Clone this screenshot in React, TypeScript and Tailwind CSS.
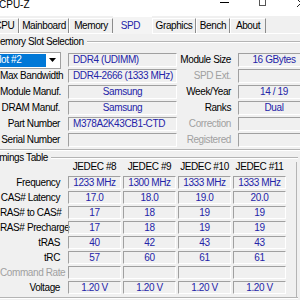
import React from "react";

const font = "font-['Liberation_Sans',Arial,sans-serif]";

interface TabItem {
  label: string;
  w: string;
  active?: boolean;
}

const tabs: TabItem[] = [
  { label: "CPU", w: "w-[29px]" },
  { label: "Mainboard", w: "w-[50px]" },
  { label: "Memory", w: "w-[44px]" },
  { label: "SPD", w: "w-[39px]", active: true },
  { label: "Graphics", w: "w-[44px]" },
  { label: "Bench", w: "w-[34px]" },
  { label: "About", w: "w-[36px]" },
];

const slotRows = [
  { l: "Max Bandwidth", v: "DDR4-2666 (1333 MHz)", left: true, r: "SPD Ext.", rv: "", dim: true },
  { l: "Module Manuf.", v: "Samsung", r: "Week/Year", rv: "14 / 19" },
  { l: "DRAM Manuf.", v: "Samsung", r: "Ranks", rv: "Dual" },
  { l: "Part Number", v: "M378A2K43CB1-CTD", left: true, r: "Correction", rv: "", dim: true },
  { l: "Serial Number", v: "", r: "Registered", rv: "", dim: true },
];

const timings = [
  { l: "Frequency", v: ["1233 MHz", "1300 MHz", "1333 MHz", "1333 MHz"] },
  { l: "CAS# Latency", v: ["17.0", "18.0", "19.0", "20.0"] },
  { l: "RAS# to CAS#", v: ["17", "18", "19", "19"] },
  { l: "RAS# Precharge", v: ["17", "18", "19", "19"] },
  { l: "tRAS", v: ["40", "42", "43", "43"] },
  { l: "tRC", v: ["57", "60", "61", "61"] },
  { l: "Command Rate", v: ["", "", "", ""], dim: true },
  { l: "Voltage", v: ["1.20 V", "1.20 V", "1.20 V", "1.20 V"] },
];

function Field({ children, className = "", left = false }: { children?: React.ReactNode; className?: string; left?: boolean }) {
  return (
    <div
      className={`shrink-0 flex items-center border border-t-[#a0a0a0] border-l-[#a0a0a0] border-b-white border-r-white text-[#2424a8] leading-none whitespace-nowrap overflow-hidden ${
        left ? "justify-start pl-[4px]" : "justify-center"
      } ${className}`}
    >
      {children}
    </div>
  );
}

function GroupHead({ title, className = "" }: { title: string; className?: string }) {
  return (
    <div className={`flex items-center ${className}`}>
      <span className="leading-none whitespace-nowrap">{title}</span>
      <div className="flex-1 ml-[3px] border-t border-t-[#b4b4b4] border-b border-b-white" />
    </div>
  );
}

export default function App() {
  return (
    <div className={`w-[300px] h-[300px] overflow-hidden bg-[#f0f0f0] text-[10px] tracking-[-0.4px] text-black ${font}`}>
      {/* title bar */}
      <div className="h-[16px] bg-white flex items-start overflow-hidden">
        <span className="-ml-px mt-px shrink-0 whitespace-nowrap leading-[8px] tracking-normal">CPU-Z</span>
        <div className="ml-[190px] mt-[2px] shrink-0 w-[9px] h-px bg-black" />
        <div className="ml-[30px] -mt-[3px] shrink-0 w-[7px] h-[9px] border border-[#555]" />
        <svg className="ml-[30px] -mt-[1px] shrink-0" width="10" height="8" viewBox="0 0 10 8">
          <path d="M1 0 L9 8 M9 0 L1 8" stroke="#222" strokeWidth="1" fill="none" />
        </svg>
      </div>

      {/* tabs */}
      <div className="h-[17px] flex items-end -ml-[10px]">
        {tabs.map((t) =>
          t.active ? (
            <div
              key={t.label}
              className={`${t.w} h-[18px] -mb-px bg-[#f4f4f4] border-t border-t-white flex items-center justify-center pr-[4px] text-[#2424a8] leading-none z-10`}
            >
              {t.label}
            </div>
          ) : (
            <div
              key={t.label}
              className={`${t.w} h-[15px] border-t border-t-white border-l border-l-white border-r border-r-[#8c8c8c] flex items-center justify-center leading-none`}
            >
              {t.label}
            </div>
          )
        )}
      </div>

      {/* panel */}
      <div className="border-t border-t-white">
        <GroupHead title="Memory Slot Selection" className="-ml-[8px] mt-[3px] h-[10px]" />

        <div className="mt-[5px] flex flex-col">
          <div className="h-[16px] flex items-center">
            <div className="-ml-[12px] w-[73px] h-[17px] shrink-0 flex bg-white border border-[#a0a0a0] p-px">
              <div className="flex-1 bg-[#0078d7] text-white flex items-center pl-[3px] leading-none">Slot #2</div>
              <div className="w-[13px] flex items-center justify-center">
                <svg width="7" height="4" viewBox="0 0 7 4">
                  <path d="M0 0 H7 L3.5 4 Z" fill="#000" />
                </svg>
              </div>
            </div>
            <Field left className="ml-[7px] w-[109px] h-[14px]">DDR4 (UDIMM)</Field>
            <div className="w-[54px] shrink-0 text-right leading-none whitespace-nowrap">Module Size</div>
            <Field className="ml-[7px] w-[72px] h-[14px]">16 GBytes</Field>
          </div>
          {slotRows.map((r) => (
            <div key={r.l} className="h-[16px] flex items-center">
              <div className="w-[61px] shrink-0 text-right pr-px leading-none whitespace-nowrap">{r.l}</div>
              <Field left={r.left} className="ml-[7px] w-[109px] h-[14px]">
                {r.v}
              </Field>
              <div className={`w-[54px] shrink-0 text-right leading-none whitespace-nowrap ${r.dim ? "text-[#a0a0a0]" : ""}`}>{r.r}</div>
              <Field className="ml-[7px] w-[72px] h-[14px]">{r.rv}</Field>
            </div>
          ))}
        </div>

        <div className="mt-px h-[2px] border-t border-t-[#b4b4b4] border-b border-b-white" />

        {/* timings group, right frame edge at x 296 */}
        <div className="w-[298px] flex flex-col">
          <GroupHead title="Timings Table" className="-ml-[8px] mt-[2px] h-[9px]" />
          <div className="border-r border-r-[#b4b4b4] w-[297px] flex flex-col">
            <div className="h-[9px] ml-[68px] flex gap-[2px] items-center">
              {["JEDEC #8", "JEDEC #9", "JEDEC #10", "JEDEC #11"].map((h) => (
                <div key={h} className="w-[53px] text-center leading-none whitespace-nowrap">
                  {h}
                </div>
              ))}
            </div>

            <div className="mt-[4px] flex flex-col">
              {timings.map((r) => (
                <div key={r.l} className="h-[15px] flex items-center">
                  <div className={`w-[61px] shrink-0 text-right pr-px leading-none whitespace-nowrap ${r.dim ? "text-[#a0a0a0]" : ""}`}>{r.l}</div>
                  <div className="ml-[7px] flex gap-[2px]">
                    {r.v.map((v, i) => (
                      <Field key={i} className="w-[53px] h-[13px]">
                        {v}
                      </Field>
                    ))}
                  </div>
                </div>
              ))}
            </div>
            <div className="h-[2px]" />
          </div>
          <div className="h-[2px] border-t border-t-[#b4b4b4] border-b border-b-white" />
        </div>
      </div>
    </div>
  );
}
